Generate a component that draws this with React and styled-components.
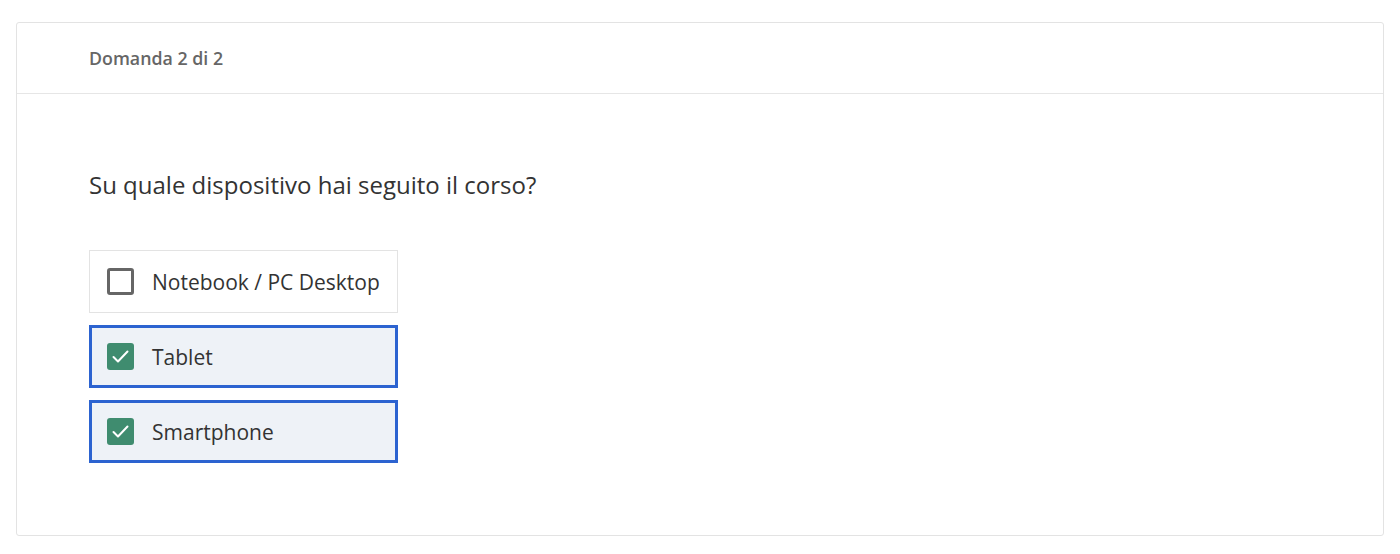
import styled, { createGlobalStyle } from 'styled-components'

const GlobalStyle = createGlobalStyle`
  body {
    margin: 0;
    background: #fff;
    font-family: "Open Sans", "Noto Sans", sans-serif;
    color: #333;
  }
`

const options = [
  { label: 'Notebook / PC Desktop', checked: false },
  { label: 'Tablet', checked: true },
  { label: 'Smartphone', checked: true },
]

function CheckIcon() {
  return (
    <svg width="19" height="19" viewBox="0 0 19 19" fill="none">
      <path d="M2.5 10l4.5 4.5 9.5-10" stroke="#fff" strokeWidth="2" strokeLinecap="round" strokeLinejoin="round" />
    </svg>
  )
}

function App() {
  return (
    <>
      <GlobalStyle />
      <Page>
        <Card>
          <Header>Domanda 2 di 2</Header>
          <Body>
            <Question>Su quale dispositivo hai seguito il corso?</Question>
            <OptionList>
              {options.map((o) => (
                <Option key={o.label} $checked={o.checked}>
                  <Box $checked={o.checked}>{o.checked && <CheckIcon />}</Box>
                  <Label>{o.label}</Label>
                </Option>
              ))}
            </OptionList>
          </Body>
        </Card>
      </Page>
    </>
  )
}

const Page = styled.div`
  padding: 22px 16px 18px 16px;
`

const Card = styled.div`
  border: 1px solid #e3e3e3;
  border-radius: 3px;
  background: #fff;
`

const Header = styled.div`
  height: 70px;
  display: flex;
  align-items: center;
  padding-left: 72px;
  border-bottom: 1px solid #e6e6e6;
  font-size: 17.8px;
  font-weight: 600;
  color: #666;
`

const Body = styled.div`
  padding: 74px 72px 72px 72px;
`

const Question = styled.div`
  font-size: 24px;
  line-height: 34px;
  color: #333;
  margin-bottom: 48px;
`

const OptionList = styled.div`
  display: flex;
  flex-direction: column;
  align-items: flex-start;
  gap: 12px;
`

const Option = styled.div`
  box-sizing: border-box;
  width: 309px;
  height: 63px;
  display: flex;
  align-items: center;
  gap: 18px;
  padding-left: ${(p) => (p.$checked ? '15px' : '17px')};
  border: ${(p) => (p.$checked ? '3px solid #2c63d0' : '1px solid #e3e3e3')};
  background: ${(p) => (p.$checked ? '#eef2f7' : '#fff')};
`

const Box = styled.div`
  box-sizing: border-box;
  width: 27px;
  height: 27px;
  border-radius: 3px;
  display: flex;
  align-items: center;
  justify-content: center;
  border: ${(p) => (p.$checked ? 'none' : '3px solid #666')};
  background: ${(p) => (p.$checked ? '#3f8c6f' : '#fff')};
`

const Label = styled.span`
  font-size: 21px;
  color: #333;
`

export default App
